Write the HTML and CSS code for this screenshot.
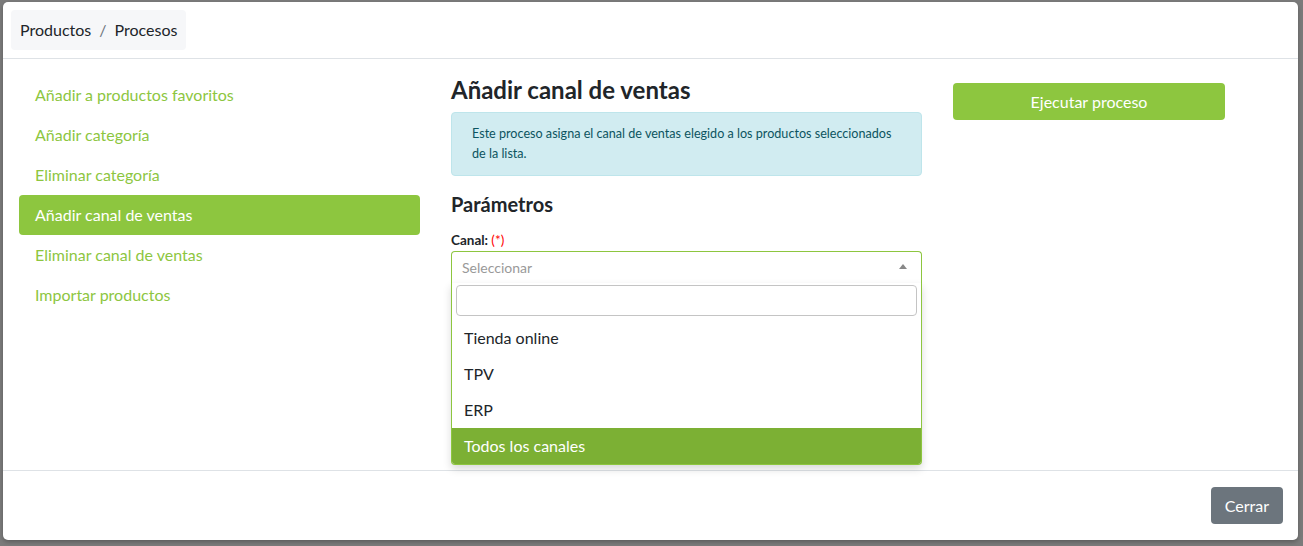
FILE: index.html
```html
<!DOCTYPE html>
<html lang="es">
<head>
    <meta charset="UTF-8">
    <meta name="viewport" content="width=device-width, initial-scale=1.0">
    <title>Procesos</title>
    <link rel="stylesheet" href="styles.css">
</head>
<body>
    <div class="backdrop">
        <div class="modal">
            <div class="modal-header">
                <ol class="breadcrumb">
                    <li>Productos</li>
                    <li class="sep">/</li>
                    <li>Procesos</li>
                </ol>
            </div>

            <div class="modal-body">
                <ul class="process-list">
                    <li><a href="#">Añadir a productos favoritos</a></li>
                    <li><a href="#">Añadir categoría</a></li>
                    <li><a href="#">Eliminar categoría</a></li>
                    <li><a href="#" class="active">Añadir canal de ventas</a></li>
                    <li><a href="#">Eliminar canal de ventas</a></li>
                    <li><a href="#">Importar productos</a></li>
                </ul>

                <div class="process-form">
                    <h4 class="title">Añadir canal de ventas</h4>
                    <div class="alert-info">
                        Este proceso asigna el canal de ventas elegido a los productos seleccionados de la lista.
                    </div>
                    <h5 class="subtitle">Parámetros</h5>
                    <label class="field-label">Canal: <span class="required">(*)</span></label>

                    <div class="select-box">
                        <div class="select-selection">
                            <span class="placeholder">Seleccionar</span>
                            <span class="arrow"></span>
                        </div>
                        <!-- desplegable abierto -->
                        <div class="select-dropdown">
                            <div class="search-wrap">
                                <input type="text" class="search-field">
                            </div>
                            <ul class="options">
                                <li>Tienda online</li>
                                <li>TPV</li>
                                <li>ERP</li>
                                <li class="highlighted">Todos los canales</li>
                            </ul>
                        </div>
                    </div>
                </div>

                <div class="process-actions">
                    <button class="btn btn-green">Ejecutar proceso</button>
                </div>
            </div>

            <div class="modal-footer">
                <button class="btn btn-grey">Cerrar</button>
            </div>
        </div>
    </div>
</body>
</html>
```

FILE: styles.css
```css
*{margin:0; padding:0; box-sizing: border-box;}
li{list-style: none;}
a{text-decoration: none;}
html,body{height: 100%;}

body{
    font-family: Lato, "Open Sans", sans-serif;
    color: #212529;
    background-color: #7b7b7b;
}

.backdrop{
    height: 100%;
    padding: 2px 5px 6px 3px;
}
.modal{
    display: flex;
    flex-direction: column;
    height: 100%;
    background-color: #fff;
    border-radius: 5px;
    box-shadow: 0 2px 4px rgba(0,0,0,0.25);
}

/* cabecera */
.modal-header{
    padding: 8px;
    border-bottom: 1px solid #dee2e6;
}
.breadcrumb{
    display: inline-flex;
    align-items: center;
    height: 40px;
    padding: 0 9px 2px;
    background-color: #f6f7f9;
    border-radius: 4px;
    font-size: 16px;
}
.breadcrumb .sep{
    padding: 0 8px;
    color: #6c757d;
}

/* cuerpo */
.modal-body{
    flex: 1;
    display: grid;
    grid-template-columns: 401px 471px 272px;
    column-gap: 31px;
    align-items: start;
    padding: 16px;
}
.process-list a{
    display: block;
    height: 40px;
    line-height: 40px;
    padding: 0 16px;
    font-size: 16px;
    color: #8dc63f;
    border-radius: 4px;
}
.process-list a.active{
    background-color: #8dc63f;
    color: #fff;
}

.title{
    font-size: 24px;
    font-weight: 700;
    line-height: 29px;
    margin-bottom: 8px;
}
.alert-info{
    padding: 11px 20px;
    font-size: 12.6px;
    line-height: 20px;
    color: #0c5460;
    background-color: #d1ecf1;
    border: 1px solid #bee5eb;
    border-radius: 4px;
}
.subtitle{
    margin-top: 16px;
    font-size: 20px;
    font-weight: 700;
    line-height: 24px;
}
.field-label{
    display: block;
    margin-top: 14px;
    font-size: 13.5px;
    font-weight: 700;
    line-height: 20px;
}
.required{
    color: #f00;
    font-weight: 400;
}

.select-box{
    position: relative;
    margin-top: 1px;
}
.select-selection{
    display: flex;
    align-items: center;
    justify-content: space-between;
    height: 32px;
    padding: 0 14px 0 10px;
    border: 1px solid #8dc63f;
    border-bottom: 0;
    border-radius: 4px 4px 0 0;
    font-size: 14px;
}
.placeholder{
    color: #999;
}
.arrow{
    width: 0; height: 0;
    border-left: 4px solid transparent;
    border-right: 4px solid transparent;
    border-bottom: 5px solid #888;
    margin-bottom: 2px;
}
.select-dropdown{
    position: absolute; left: 0; top: 32px;
    width: 100%;
    background-color: #fff;
    border: 1px solid #8dc63f;
    border-top: 0;
    border-radius: 0 0 4px 4px;
    box-shadow: 0 4px 8px rgba(0,0,0,0.15);
    overflow: hidden;
}
.search-wrap{
    padding: 2px 4px 4px;
}
.search-field{
    display: block;
    width: 100%;
    height: 31px;
    border: 1px solid #c4c4c4;
    border-radius: 4px;
}
.options li{
    height: 36px;
    line-height: 36px;
    padding: 0 12px;
    font-size: 16px;
}
.options li.highlighted{
    background-color: #7cb034;
    color: #fff;
}

.btn{
    height: 37px;
    border: 0;
    border-radius: 4px;
    font-family: Lato, "Open Sans", sans-serif;
    font-size: 16px;
    color: #fff;
    cursor: pointer;
}
.btn-green{
    width: 100%;
    margin-top: 8px;
    background-color: #8dc63f;
}
.btn-grey{
    padding: 0 14px;
    background-color: #6c757d;
}

/* pie */
.modal-footer{
    display: flex;
    justify-content: flex-end;
    padding: 16px 15px;
    border-top: 1px solid #dee2e6;
}
```
